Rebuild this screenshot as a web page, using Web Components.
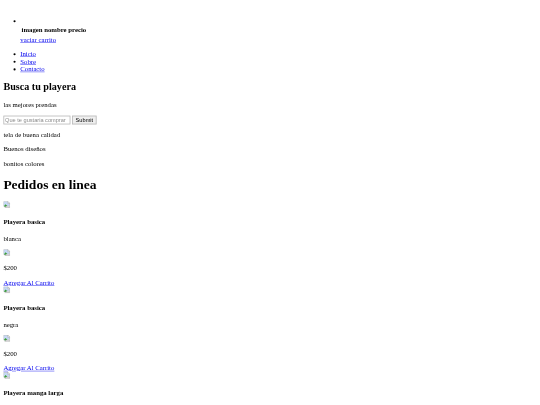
<!DOCTYPE html>
<html lang="es">
<head>
<meta charset="utf-8">
<title>Pedidos en linea</title>
<style>
  html { overflow: hidden; height: 405px; }
  body { font-family: "Liberation Serif", serif; margin: 0; padding: 8px; transform: scale(0.421875); transform-origin: 0 0; filter: blur(0.4px); }
</style>
</head>
<body>
<template id="broken-tpl">
  <style>
    :host { display: inline-block; width: 16px; height: 16px; }
    svg { display: block; }
  </style>
  <svg width="16" height="16" viewBox="0 0 16 16">
    <path d="M.5.5h10l5 5v4l-3.5 2-3-1-3.500 2.500-5-1z" fill="#c5d8f5" stroke="#9a9a9a"/>
    <path d="M10.500.5v5h5z" fill="#fff" stroke="#9a9a9a"/>
    <path d="M1 12l4-5 4 3.500-4 2.500z" fill="#3f9e3a"/>
    <path d="M3 15.500l6-3 3 1 3.500-2v4z" fill="#dcdcdc" stroke="#a5a5a5"/>
  </svg>
</template>
<script>
class BrokenImg extends HTMLElement {
    constructor() {
        super();
        this.attachShadow({mode: 'open'}).appendChild(document.getElementById('broken-tpl').content.cloneNode(true));
    }
}
customElements.define('broken-img', BrokenImg);

class CartMenu extends HTMLElement {
    constructor() {
        super();
        this.attachShadow({mode: 'open'}).innerHTML = `
        <style>
            :host { display: block; }
            ul { margin: 16px 0; padding: 17px 0 0 40px; }
            a { display: block; margin-top: 2px; }
        </style>
        <ul>
            <li>
                <br>
                <table>
                    <tr><th>imagen</th><th>nombre</th><th>precio</th></tr>
                </table>
                <a href="#">vaciar carrito</a>
            </li>
        </ul>`;
    }
}
customElements.define('cart-menu', CartMenu);

class MainNav extends HTMLElement {
    constructor() {
        super();
        this.attachShadow({mode: 'open'}).innerHTML = `
        <style>
            :host { display: block; }
        </style>
        <ul>
            <li><a href="#">Inicio</a></li>
            <li><a href="#">Sobre</a></li>
            <li><a href="#">Contacto</a></li>
        </ul>`;
    }
}
customElements.define('main-nav', MainNav);

class SearchHero extends HTMLElement {
    constructor() {
        super();
        this.attachShadow({mode: 'open'}).innerHTML = `
        <style>
            :host { display: block; }
            input { font-family: "Liberation Sans", sans-serif; box-sizing: border-box; height: 21px; font-size: 13.33px; }
            .text { width: 159px; border: 2px solid #bbb; padding: 1px 2px; }
            .text::placeholder { color: #8a8a8a; }
            .send { width: 58px; border: 2px solid #bbb; background: #efefef; padding: 1px 6px; color: #000; }
        </style>
        <h2>Busca tu playera</h2>
        <p>las mejores prendas</p>
        <form onsubmit="return false">
            <input class="text" type="text" placeholder="Que te gustaria comprar">
            <input class="send" type="submit" value="Submit">
        </form>
        <p>tela de buena calidad</p>
        <p>Buenos diseños</p>
        <p>bonitos colores</p>`;
    }
}
customElements.define('search-hero', SearchHero);

class ProductCard extends HTMLElement {
    constructor() {
        super();
        this.attachShadow({mode: 'open'});
    }

    connectedCallback() {
        let color = this.getAttribute('color');
        this.shadowRoot.innerHTML = `
        <style>
            :host { display: block; }
            a { display: block; }
            h4:last-child { margin-bottom: 0; }
        </style>
        <broken-img></broken-img>
        <h4>${this.getAttribute('name')}</h4>
        ${color ? `<p>${color}</p>
        <broken-img></broken-img>
        <p>$200</p>
        <a href="#">Agregar Al Carrito</a>` : ''}`;
    }
}
customElements.define('product-card', ProductCard);
</script>
<cart-menu></cart-menu>
<main-nav></main-nav>
<search-hero></search-hero>
<h1>Pedidos en linea</h1>
<product-card name="Playera basica" color="blanca"></product-card>
<product-card name="Playera basica" color="negra"></product-card>
<product-card name="Playera manga larga"></product-card>
</body>
</html>
